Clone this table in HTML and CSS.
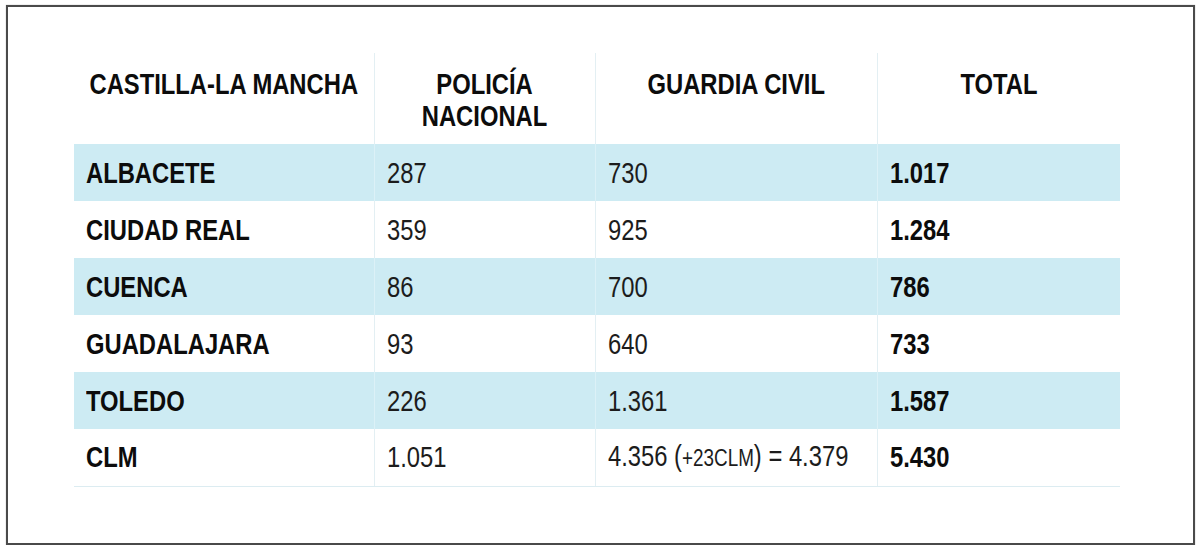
FILE: index.html
```html
<!DOCTYPE html>
<html lang="es">
<head>
<meta charset="utf-8">
<title>Castilla-La Mancha</title>
<link rel="stylesheet" href="styles.css">
</head>
<body>
<div class="frame">
  <table class="data">
    <colgroup>
      <col class="c1"><col class="c2"><col class="c3"><col class="c4">
    </colgroup>
    <thead>
      <tr>
        <th><div class="hc"><span class="t">CASTILLA-LA MANCHA</span></div></th>
        <th><div class="hc"><span class="t">POLICÍA<br>NACIONAL</span></div></th>
        <th><div class="hc"><span class="t">GUARDIA CIVIL</span></div></th>
        <th><div class="hc"><span class="t">TOTAL</span></div></th>
      </tr>
    </thead>
    <tbody>
      <tr class="hl"><td class="name"><span class="t">ALBACETE</span></td><td><span class="t">287</span></td><td><span class="t">730</span></td><td class="tot"><span class="t">1.017</span></td></tr>
      <tr><td class="name"><span class="t">CIUDAD REAL</span></td><td><span class="t">359</span></td><td><span class="t">925</span></td><td class="tot"><span class="t">1.284</span></td></tr>
      <tr class="hl"><td class="name"><span class="t">CUENCA</span></td><td><span class="t">86</span></td><td><span class="t">700</span></td><td class="tot"><span class="t">786</span></td></tr>
      <tr><td class="name"><span class="t">GUADALAJARA</span></td><td><span class="t">93</span></td><td><span class="t">640</span></td><td class="tot"><span class="t">733</span></td></tr>
      <tr class="hl"><td class="name"><span class="t">TOLEDO</span></td><td><span class="t">226</span></td><td><span class="t">1.361</span></td><td class="tot"><span class="t">1.587</span></td></tr>
      <tr class="last"><td class="name"><span class="t">CLM</span></td><td><span class="t">1.051</span></td><td><span class="t">4.356 (<span class="small">+23CLM</span>) = 4.379</span></td><td class="tot"><span class="t">5.430</span></td></tr>
    </tbody>
  </table>
</div>
</body>
</html>
```
FILE: styles.css
```css
html, body {
  margin: 0;
  padding: 0;
  background: #ffffff;
}
body {
  font-family: "Liberation Sans", Arial, sans-serif;
  color: #111;
}
.frame {
  box-sizing: border-box;
  width: 1189px;
  height: 540px;
  margin: 5px 0 0 6px;
  border: 2px solid #4a4a4a;
  box-shadow: 0 0 1px rgba(0,0,0,0.35);
  padding: 46px 0 0 66px;
}
.data {
  border-collapse: collapse;
  table-layout: fixed;
  width: 1046px;
}
.c1 { width: 300px; }
.c2 { width: 221px; }
.c3 { width: 282px; }
.c4 { width: 243px; }
.t {
  display: inline-block;
  white-space: nowrap;
  transform: scaleX(0.82);
  transform-origin: left center;
}
.hc {
  display: flex;
  justify-content: center;
  text-align: center;
}
.hc .t {
  flex: none;
  transform-origin: center center;
}
.data th {
  height: 91px;
  box-sizing: border-box;
  padding: 15px 0 0;
  vertical-align: top;
  font-weight: bold;
  font-size: 29px;
  line-height: 32px;
  color: #0c0c0c;
  border-left: 1px solid #e3eff3;
  white-space: nowrap;
}
.data td {
  height: 57px;
  box-sizing: border-box;
  padding: 0 0 0 12px;
  vertical-align: middle;
  font-size: 29px;
  line-height: 32px;
  color: #1c1c1c;
  border-left: 1px solid #e3eff3;
  white-space: nowrap;
  overflow: visible;
}
.data th:first-child,
.data td:first-child {
  border-left: none;
}
.data tr.hl td {
  background: #cdebf3;
  border-left-color: #dcf1f7;
}
.data tr.last td {
  border-bottom: 1px solid #dcecf1;
}
.data td.name,
.data td.tot {
  font-weight: bold;
  color: #0c0c0c;
}
.small {
  font-size: 23px;
}
```
